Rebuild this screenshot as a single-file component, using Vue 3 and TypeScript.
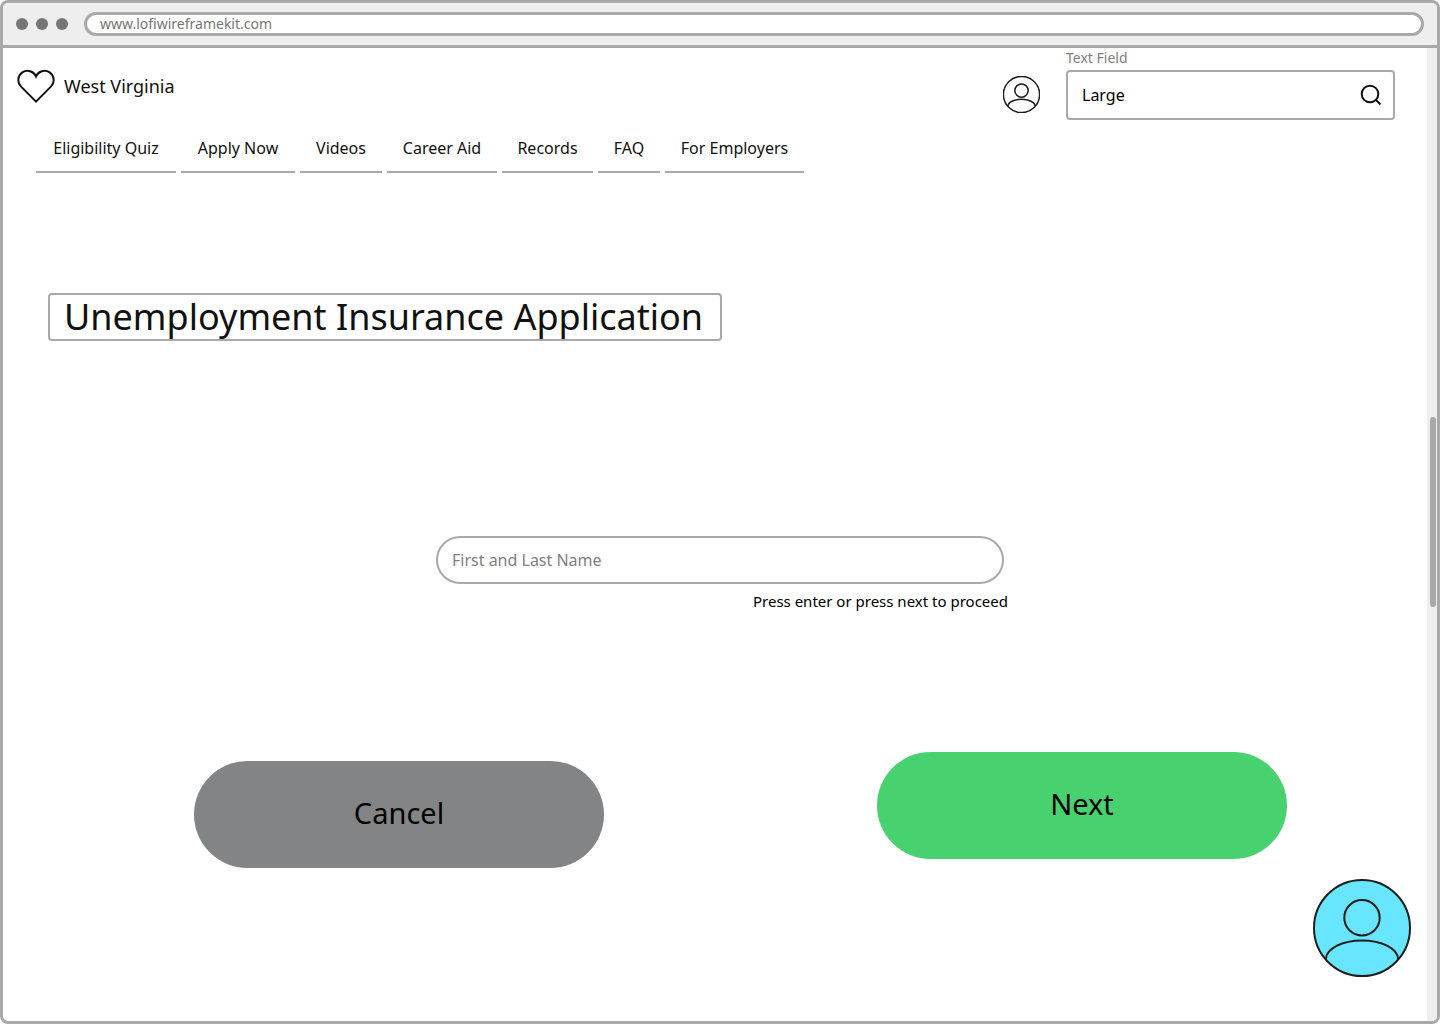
<script setup lang="ts">
import { ref } from 'vue'

const address = ref('www.lofiwireframekit.com')
const search = ref('Large')
const fullName = ref('')

const tabs: string[] = [
  'Eligibility Quiz',
  'Apply Now',
  'Videos',
  'Career Aid',
  'Records',
  'FAQ',
  'For Employers',
]
</script>

<template>
  <div class="browser">
    <svg class="defs" aria-hidden="true">
      <symbol id="person" viewBox="0 0 98 98">
        <circle cx="49" cy="49" r="48" />
        <circle class="hollow" cx="49" cy="38.7" r="17.7" />
        <path class="hollow" d="M13 81v-1a36 18.5 0 0 1 72 0v1" />
      </symbol>
    </svg>

    <div class="chrome">
      <span class="dot"></span>
      <span class="dot"></span>
      <span class="dot"></span>
      <input v-model="address" class="address" type="text" aria-label="Address" />
    </div>

    <div class="viewport">
      <div class="page">
        <header class="header">
          <a class="brand" href="#">
            <svg class="heart" viewBox="0 0 38 34" aria-hidden="true">
              <path d="M19 32.6 4.1 17.6A9.2 9.2 0 1 1 19 7.4 9.2 9.2 0 1 1 33.9 17.6Z" />
            </svg>
            West Virginia
          </a>
          <div class="tools">
            <button class="account" type="button" aria-label="Account">
              <svg><use href="#person" /></svg>
            </button>
            <div class="field">
              <label for="search">Text Field</label>
              <div class="search">
                <input id="search" v-model="search" type="text" />
                <svg viewBox="0 0 24 24" aria-hidden="true">
                  <circle cx="11" cy="11" r="8.3" />
                  <path d="m16.5 16.5 5 5" />
                </svg>
              </div>
            </div>
          </div>
        </header>

        <nav class="tabs">
          <a v-for="tab in tabs" :key="tab" href="#">{{ tab }}</a>
        </nav>

        <h1 class="title">Unemployment Insurance Application</h1>

        <form class="form" @submit.prevent>
          <div class="question">
            <input
              v-model="fullName"
              type="text"
              placeholder="First and Last Name"
              aria-label="First and Last Name"
            />
            <p>Press enter or press next to proceed</p>
          </div>
          <div class="actions">
            <button class="cancel" type="button">Cancel</button>
            <button class="next" type="submit">Next</button>
          </div>
        </form>

        <button class="assistant" type="button" aria-label="Assistant">
          <svg><use href="#person" /></svg>
        </button>
      </div>
      <div class="track"><div class="thumb"></div></div>
    </div>
  </div>
</template>

<style>
body {
  margin: 0;
  background: #fff;
}
</style>

<style scoped>
.browser,
.browser * {
  box-sizing: border-box;
}
.browser {
  display: flex;
  flex-direction: column;
  min-height: 100vh;
  border: 3px solid #a9a9a9;
  border-radius: 8px;
  overflow: hidden;
  background: #fff;
  color: #111;
  font-family: 'Noto Sans', sans-serif;
  font-size: 16px;
  line-height: 24px;
}
.defs {
  position: absolute;
  width: 0;
  height: 0;
}
input,
button {
  font: inherit;
  color: inherit;
  outline: none;
}
button {
  padding: 0;
  border: 0;
  background: none;
  cursor: pointer;
}
a {
  color: inherit;
  text-decoration: none;
}
svg {
  display: block;
  fill: none;
  stroke: #111;
  stroke-width: 2px;
}

.chrome {
  display: flex;
  align-items: center;
  gap: 8px;
  height: 45px;
  padding: 0 13px;
  border-bottom: 3px solid #a9a9a9;
  background: #eee;
}
.dot {
  width: 12px;
  height: 12px;
  border-radius: 50%;
  background: #757575;
}
.address {
  flex: 1;
  min-width: 0;
  height: 24px;
  margin-left: 8px;
  padding: 0 13px 2px;
  border: 3px solid #a9a9a9;
  border-radius: 12px;
  background: #fff;
  color: #757575;
  font-size: 14px;
  line-height: 16px;
}

.viewport {
  display: flex;
  flex: 1;
}
.page {
  display: flex;
  flex: 1;
  flex-direction: column;
  min-width: 0;
}
.track {
  width: 10px;
  padding: 369px 1px 0 3px;
  background: #eee;
}
.thumb {
  height: 190px;
  border-radius: 3px;
  background: #a9a9a9;
}

.header {
  display: flex;
  justify-content: space-between;
  padding: 0 32px 0 14px;
}
.brand {
  display: flex;
  align-items: center;
  align-self: flex-end;
  gap: 9px;
  height: 34px;
  margin-bottom: 17px;
  font-size: 18px;
}
.heart {
  width: 38px;
  height: 34px;
}
.tools {
  display: flex;
  align-items: flex-end;
  gap: 26px;
}
.account {
  width: 37px;
  height: 37px;
  margin-bottom: 7px;
}
.account svg {
  width: 37px;
  height: 37px;
  stroke-width: 4px;
}
.account svg,
.assistant svg {
  stroke: #1d1d1b;
}
.field {
  width: 329px;
}
.field label {
  display: block;
  height: 22px;
  color: #808080;
  font-size: 14px;
  line-height: 20px;
}
.search {
  display: flex;
  align-items: center;
  height: 50px;
  padding: 0 10px 0 14px;
  border: 2px solid #a9a9a9;
  border-radius: 4px;
}
.search input {
  flex: 1;
  min-width: 0;
  padding: 0;
  border: 0;
  background: none;
  color: #000;
}
.search svg {
  width: 24px;
  height: 24px;
}

.tabs {
  display: grid;
  grid-template-columns: 140px 114px 82px 110px 91px 62px 139px;
  gap: 5px;
  margin: 5px 0 0 33px;
}
.tabs a {
  height: 48px;
  border-bottom: 2px solid #a9a9a9;
  line-height: 46px;
  text-align: center;
  white-space: nowrap;
}

.title {
  align-self: flex-start;
  width: 674px;
  height: 48px;
  margin: 120px 0 0 45px;
  padding: 0 14px;
  border: 2px solid #a9a9a9;
  border-radius: 4px;
  font-size: 36px;
  font-weight: 400;
  line-height: 44px;
  white-space: nowrap;
}

.form {
  margin-top: 195px;
}
.question {
  width: 578px;
  margin: 0 auto;
  padding-left: 10px;
}
.question input {
  display: block;
  width: 100%;
  height: 48px;
  padding: 0 14px;
  border: 2px solid #a9a9a9;
  border-radius: 24px;
  background: #fff;
}
.question input::placeholder {
  color: #808080;
  opacity: 1;
}
.question p {
  margin: 5px -4px 0 0;
  color: #000;
  font-size: 15px;
  text-align: right;
}
.actions {
  display: flex;
  justify-content: space-between;
  height: 116px;
  margin-top: 139px;
  padding: 0 140px 0 191px;
}
.actions button {
  width: 410px;
  height: 107px;
  padding-bottom: 4px;
  border-radius: 54px;
  color: #000;
  font-size: 29px;
}
.actions .cancel {
  align-self: flex-end;
  background: #838485;
}
.actions .next {
  background: #48d26f;
}

.assistant {
  align-self: flex-end;
  width: 98px;
  height: 98px;
  margin: 11px 16px 44px 0;
}
.assistant svg {
  width: 98px;
  height: 98px;
  fill: #68e5ff;
}
.hollow {
  fill: none;
}
</style>
